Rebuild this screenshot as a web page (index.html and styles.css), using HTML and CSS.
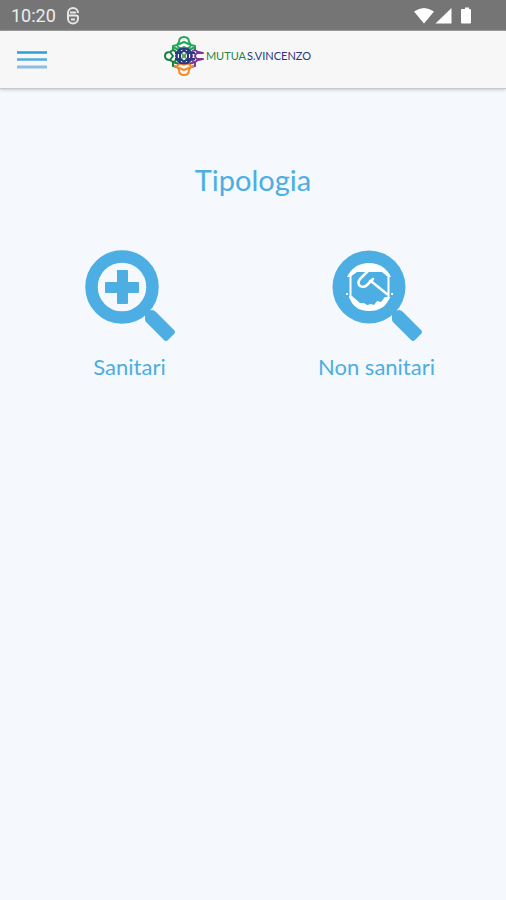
FILE: index.html
```html
<!DOCTYPE html>
<html lang="it">
<head>
<meta charset="utf-8">
<meta name="viewport" content="width=device-width, initial-scale=1">
<title>Mutua S. Vincenzo</title>
<link rel="stylesheet" href="styles.css">
</head>
<body>
<div class="status">
  <div class="status-group">
    <span class="time">10:20</span>
    <svg width="14" height="18" viewBox="0 0 14 18" fill="none" stroke="#e6e6e6" aria-hidden="true">
      <path d="M2 9V6a5 5 0 0 1 10 0M2 8.500h8q2 0 2 2v1a5 5 0 0 1-10 0v-3" stroke-width="2"/>
      <path d="M4 5.500h6M5 12.500h4" stroke-width="2"/>
    </svg>
  </div>
  <svg width="60" height="18" viewBox="0 0 60 18" fill="#fff" aria-hidden="true">
    <path d="M0 4.500Q10-2.500 20 4.500L10 16.500z"/>
    <path d="M37.500 1v15.500H21.500z"/>
    <path d="M49 2h2V.5h4V2h1q1 0 1 1v12.500q0 1-1 1h-8q-1 0-1-1V3q0-1 1-1z"/>
  </svg>
</div>
<header class="bar">
  <button class="menu" type="button" aria-label="Menu">
    <svg width="30" height="20" viewBox="0 0 30 20" aria-hidden="true">
      <path d="M0 2.500h30" stroke="#2b9fd6" stroke-width="2.500"/>
      <path d="M0 9.500h30" stroke="#55abdc" stroke-width="2.500"/>
      <path d="M0 17h30" stroke="#8bbce2" stroke-width="3"/>
    </svg>
  </button>
  <a class="brand" href="#">
    <svg width="40" height="42" viewBox="0 0 40 42" fill="none" stroke-width="2" stroke-linejoin="round" aria-hidden="true">
      <g stroke="#27a65a">
        <path d="M9 15v-4l4-1 2-3q0-5 5-5t5 5l2 3 4 1v4"/>
        <path d="M13 10l7-3 7 3M13 10q2 5 7 2 5 3 7-2M9 12l6 3M31 12l-6 3"/>
      </g>
      <g stroke="#168044">
        <path d="M9 15l-3 2q-5 0-5 4t5 4l3 2v4l4 1"/>
        <path d="M9 15q4 1 4 6t-4 6M6 17l3 4-3 4M9 27l6 2"/>
      </g>
      <g stroke="#7d3597">
        <path d="M31 15l3 2 5 1h-6q-4 3 0 6h6l-5 1-3 2v4l-4 1"/>
        <path d="M31 15q-4 1-4 6t4 6M31 27l-6 2"/>
      </g>
      <g stroke="#f28c28">
        <path d="M10 31l3 1 2 3q0 5 5 5t5-5l2-3 3-1"/>
        <path d="M13 32l7 3 7-3M13 32q2-5 7-2 5-3 7 2"/>
      </g>
      <g stroke="#263b80">
        <path d="M14 16q2-3 6-2 4-1 6 2l2 5-2 5q-2 3-6 2-4 1-6-2l-2-5z"/>
        <path d="M11 18h6l3-3 3 3h8M11 24h6l3 3 3-3h8M16 15v12M24 15v12"/>
      </g>
      <path d="M18 19l4 4M22 19l-4 4" stroke="#50a04e"/>
    </svg>
    <span class="brand-name"><span class="brand-first">MUTUA</span>S.VINCENZO</span>
  </a>
</header>
<main class="content">
  <h1>Tipologia</h1>
  <nav class="choices" aria-label="Tipologia">
    <a class="choice" href="#">
      <svg width="90" height="92" viewBox="0 0 90 92" aria-hidden="true">
        <circle cx="37" cy="37" r="30.500" fill="none" stroke="#4caee2" stroke-width="12.500"/>
        <path d="M32 20h10q1 0 1 1v11h10q1 0 1 1v9q0 1-1 1H43v10q0 1-1 1h-9q-1 0-1-1V43H21q-1 0-1-1v-9q0-1 1-1h11z" fill="#4caee2"/>
        <path d="M60 69V63q3-3 7-3 2 0 4 2l18 18q2 2 0 4l-6 6q-2 2-4 0L61 72q-1-1-1-3z" fill="#4caee2"/>
      </svg>
      <span>Sanitari</span>
    </a>
    <a class="choice" href="#">
      <svg width="90" height="92" viewBox="0 0 90 92" aria-hidden="true">
        <circle cx="37" cy="37" r="36.500" fill="#4caee2"/>
        <path d="M60 69V63q3-3 7-3 2 0 4 2l18 18q2 2 0 4l-6 6q-2 2-4 0L61 72q-1-1-1-3z" fill="#4caee2"/>
        <path d="M15 27Q22 13 37 13t22 14h-3l-6-5H25l-7 5z" fill="#fff"/>
        <path d="M17 46h3l8 7 4 0 3 2 4-1 3 1 3-4 4 1 4-5h5Q53 61 37 61T17 46z" fill="#fff"/>
        <path d="M18.500 24v25M56.500 24v25" stroke="#fff" stroke-width="2"/>
        <path d="M36 21l-8 8q-3 4 0 7 4 2 7-1l6-6M38 31l2 1 15 12" fill="none" stroke="#fff" stroke-width="2.500" stroke-linecap="round" stroke-linejoin="round"/>
        <path d="M14 44h2M59 44h2" stroke="#fff" stroke-width="2"/>
      </svg>
      <span>Non sanitari</span>
    </a>
  </nav>
</main>
</body>
</html>
```
FILE: styles.css
```css
* { box-sizing: border-box; }

body {
  margin: 0;
  min-height: 100vh;
  background: #f5f9fd;
  color: #4caee2;
  font-family: Lato, "Open Sans", sans-serif;
}

a { color: inherit; text-decoration: none; }
svg { display: block; overflow: visible; }

.status {
  display: flex;
  align-items: center;
  justify-content: space-between;
  height: 31px;
  padding: 2px 32px 0 11px;
  background: #757575;
  border-bottom: 1px solid #8c8c8c;
  color: #ededed;
}

.status-group { display: flex; align-items: center; gap: 10px; }
.time { font: 18px/24px Roboto, sans-serif; }

.bar {
  display: grid;
  grid-template-columns: 1fr auto 1fr;
  align-items: center;
  height: 58px;
  padding: 0 17px;
  background: #f7f7f7;
  border-bottom: 1px solid #c6c9cc;
  box-shadow: 0 1px 3px #c5cbd0;
}

.menu { justify-self: start; padding: 0; border: 0; background: none; cursor: pointer; }

.brand {
  grid-column: 2;
  display: flex;
  align-items: center;
  gap: 2px;
  margin: 0 31px 7px 0;
}

.brand-name { color: #29397d; font-size: 11px; line-height: 16px; }
.brand-first { margin-right: 1px; color: #27853f; }

.content { padding: 71px 6px 24px; }

h1 {
  margin: 0;
  font-size: 29px;
  line-height: 40px;
  font-weight: 400;
  text-align: center;
}

.choices {
  display: grid;
  grid-template-columns: 1fr 1fr;
  margin-top: 50px;
}

.choice {
  display: flex;
  flex-direction: column;
  align-items: center;
  gap: 10px;
  font-size: 22px;
  line-height: 30px;
}
```
